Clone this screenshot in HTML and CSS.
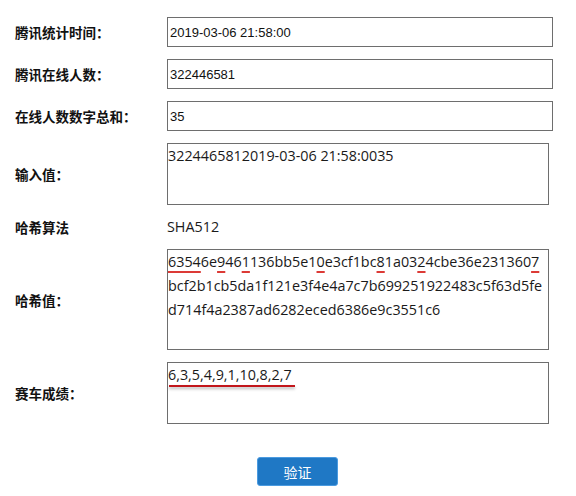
FILE: index.html
```html
<!DOCTYPE html>
<html lang="zh-CN">
<head>
<meta charset="utf-8">
<title>验证</title>
<link rel="stylesheet" href="styles.css">
</head>
<body>
<form class="form">
  <div class="grid">
    <label class="label">腾讯统计时间：</label>
    <input class="input" type="text" value="2019-03-06 21:58:00">

    <label class="label">腾讯在线人数：</label>
    <input class="input" type="text" value="322446581">

    <label class="label">在线人数数字总和：</label>
    <input class="input" type="text" value="35">

    <label class="label">输入值：</label>
    <div class="box box-sm">3224465812019-03-06 21:58:0035</div>

    <label class="label">哈希算法</label>
    <div class="plain">SHA512</div>

    <label class="label">哈希值：</label>
    <div class="box box-lg"><span class="sp">6354</span>6e<span class="sp">9</span>46<span class="sp">1</span>136bb5e1<span class="sp">0</span>e3cf1bc<span class="sp">8</span>1a03<span class="sp">2</span>4cbe36e231360<span class="sp">7</span><br>bcf2b1cb5da1f121e3f4e4a7c7b699251922483c5f63d5fe<br>d714f4a2387ad6282eced6386e9c3551c6</div>

    <label class="label">赛车成绩：</label>
    <div class="box box-sm"><span class="mark">6,3,5,4,9,1,10,8,2,7</span></div>
  </div>
  <div class="actions">
    <button class="btn" type="button">验证</button>
  </div>
</form>
</body>
</html>
```
FILE: styles.css
```css
* { box-sizing: border-box; }
html, body { margin: 0; padding: 0; background: #fff; }
body { width: 576px; height: 496px; overflow: hidden; }

.form {
  padding: 17px 0 0 15px;
}

.grid {
  display: grid;
  grid-template-columns: 152px auto;
  row-gap: 12px;
  align-items: center;
}

.label {
  font-family: "Noto Sans CJK SC", sans-serif;
  font-weight: 700;
  font-size: 13.5px;
  color: #111;
  white-space: nowrap;
}

.input {
  width: 386px;
  height: 30px;
  margin: 0;
  padding: 0 2px;
  border: 1px solid #6e6e6e;
  border-radius: 0;
  background: #fff;
  font-family: "Liberation Sans", Arial, sans-serif;
  font-size: 13px;
  color: #111;
  outline: none;
}

.box {
  width: 382px;
  border: 1px solid #6e6e6e;
  padding: 0;
  background: #fff;
  font-family: "Open Sans", sans-serif;
  font-size: 14.35px;
  line-height: 24px;
  color: #1a1a1a;
  white-space: nowrap;
  overflow: hidden;
}
.box-sm { height: 62px; }
.box-lg { height: 101px; }

.plain {
  height: 20px;
  font-family: "Open Sans", sans-serif;
  font-size: 14.35px;
  line-height: 20px;
  color: #1a1a1a;
}

.sp {
  text-decoration: underline solid #dc3a36;
  text-decoration-thickness: 2px;
  text-underline-offset: 4px;
}

.mark {
  position: relative;
}
.mark::after {
  content: "";
  position: absolute;
  left: 1px;
  right: -3px;
  top: calc(100% + 1px);
  height: 2px;
  background: #c2161b;
  box-shadow: 0 2px 3px rgba(0, 0, 0, 0.3);
}

.actions {
  display: flex;
  padding-left: 242px;
  margin-top: 33px;
}

.btn {
  width: 81px;
  height: 29px;
  margin: 0;
  padding: 0;
  border: 1px solid #4b9be0;
  border-radius: 3px;
  background: #1f78c5;
  color: #fff;
  font-family: "Noto Sans CJK SC", sans-serif;
  font-size: 14px;
  cursor: pointer;
}
```
